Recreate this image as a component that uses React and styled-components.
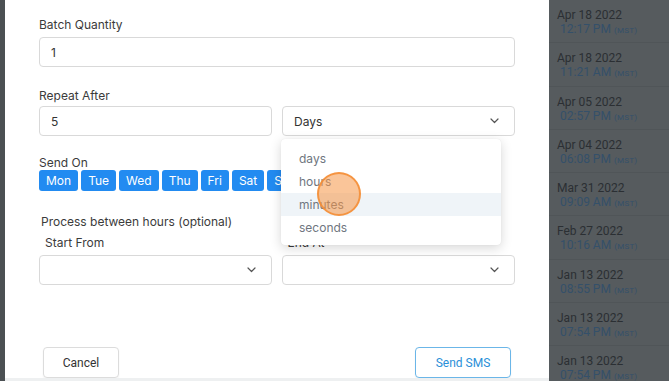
import React from "react";
import styled, { createGlobalStyle } from "styled-components";

const Global = createGlobalStyle`
  html, body { margin: 0; padding: 0; background: #fff; }
  body { font-family: Inter, "Noto Sans", sans-serif; }
  * { box-sizing: border-box; }
`;

const Page = styled.div`
  display: flex;
  width: 669px;
  height: 381px;
  overflow: hidden;
`;

const LeftStrip = styled.div`
  width: 5px;
  flex: none;
  background: #4b5053;
`;

const Modal = styled.div`
  position: relative;
  width: 544px;
  flex: none;
  display: flex;
  flex-direction: column;
  background: #fff;
`;

const Body = styled.div`
  flex: 1;
  display: flex;
  flex-direction: column;
  padding: 17px 34px 0 34px;
`;

const BottomStrip = styled.div`
  height: 3px;
  background: #eef0f1;
`;

const Label = styled.div`
  font-size: 12px;
  line-height: 15px;
  height: 15px;
  color: #3b3b3b;
  margin: ${(p) => p.$m || "0"};
  padding-left: ${(p) => p.$indent || 0}px;
`;

const Row = styled.div`
  display: flex;
  gap: 10px;
  margin: ${(p) => p.$m || "0"};
  & > * {
    flex: 1 1 0;
  }
`;

const Input = styled.div`
  height: 30px;
  flex-shrink: 0;
  border: 1px solid #d9d9d9;
  border-radius: 4px;
  display: flex;
  align-items: center;
  justify-content: space-between;
  padding: 0 15px 0 11px;
  font-size: 12px;
  color: #333;
  margin: ${(p) => p.$m || "0"};
`;

const Chevron = () => (
  <svg width="9" height="6" viewBox="0 0 9 6" fill="none">
    <path d="M1 1l3.5 3.5L8 1" stroke="#555" strokeWidth="1.2" strokeLinecap="round" strokeLinejoin="round" />
  </svg>
);

const Days = styled.div`
  display: flex;
  gap: 3px;
  flex-shrink: 0;
`;

const DayBtn = styled.div`
  height: 21px;
  padding: 0 7px;
  background: #228bf1;
  color: #fff;
  font-size: 12px;
  border-radius: 3px;
  display: flex;
  align-items: center;
  justify-content: center;
`;

const Footer = styled.div`
  margin-top: auto;
  display: flex;
  justify-content: space-between;
  padding: 0 4px 0 4px;
`;

const Button = styled.div`
  height: 31px;
  width: ${(p) => p.$w}px;
  border: 1px solid ${(p) => (p.$primary ? "#6bb6e8" : "#dcdcdc")};
  border-radius: 4px;
  color: ${(p) => (p.$primary ? "#2a8fd8" : "#333")};
  font-family: Roboto, "Liberation Sans", sans-serif;
  font-size: 12px;
  display: flex;
  align-items: center;
  justify-content: center;
  box-shadow: 0 1px 2px rgba(0, 0, 0, 0.06);
`;

const Menu = styled.div`
  position: absolute;
  left: 276px;
  top: 139px;
  width: 220px;
  padding: 8px 0 6px;
  background: #fff;
  border-radius: 4px;
  box-shadow: 0 3px 12px rgba(0, 0, 0, 0.16), 0 0 1px rgba(0, 0, 0, 0.1);
`;

const MenuItem = styled.div`
  height: 23px;
  display: flex;
  align-items: center;
  padding-left: 18px;
  font-size: 12px;
  color: #6f7680;
  background: ${(p) => (p.$active ? "#eff4f8" : "transparent")};
`;

const Cursor = styled.div`
  position: absolute;
  left: 312px;
  top: 172px;
  width: 44px;
  height: 44px;
  border-radius: 50%;
  background: rgba(246, 150, 70, 0.55);
  border: 2px solid rgba(245, 140, 50, 0.85);
`;

const Side = styled.div`
  flex: 1;
  background: #565b5e;
  font-family: Roboto, "Liberation Sans", sans-serif;
`;

const Entry = styled.div`
  height: 43.3px;
  padding: 8px 0 0 8px;
  border-bottom: 1px solid rgba(0, 0, 0, 0.06);
`;

const DateText = styled.div`
  font-size: 12px;
  line-height: 14px;
  color: #2b2f33;
`;

const TimeText = styled.div`
  font-size: 12px;
  line-height: 14px;
  color: #34506a;
  padding-left: 3px;
  span {
    font-size: 8px;
    letter-spacing: 0.3px;
  }
`;

const entries = [
  ["Apr 18 2022", "12:17 PM"],
  ["Apr 18 2022", "11:21 AM"],
  ["Apr 05 2022", "02:57 PM"],
  ["Apr 04 2022", "06:08 PM"],
  ["Mar 31 2022", "09:09 AM"],
  ["Feb 27 2022", "10:16 AM"],
  ["Jan 13 2022", "08:55 PM"],
  ["Jan 13 2022", "07:54 PM"],
  ["Jan 13 2022", "07:54 PM"],
];

const days = ["Mon", "Tue", "Wed", "Thu", "Fri", "Sat", "Sun"];

export default function App() {
  return (
    <Page>
      <Global />
      <LeftStrip />
      <Modal>
        <Body>
          <Label>Batch Quantity</Label>
          <Input $m="5px 0 0 0">1</Input>
          <Label $m="21px 0 0 0">Repeat After</Label>
          <Row $m="3px 0 0 0">
            <Input>5</Input>
            <Input>
              Days
              <Chevron />
            </Input>
          </Row>
          <Label $m="19px 0 0 0">Send On</Label>
          <Days>
            {days.map((d) => (
              <DayBtn key={d}>{d}</DayBtn>
            ))}
          </Days>
          <Label $m="23px 0 0 0" $indent={2}>Process between hours (optional)</Label>
          <Row $m="6px 0 0 0">
            <Label $indent={6}>Start From</Label>
            <Label $indent={5}>End At</Label>
          </Row>
          <Row $m="5px 0 0 0">
            <Input>
              <span />
              <Chevron />
            </Input>
            <Input>
              <span />
              <Chevron />
            </Input>
          </Row>
          <Footer>
            <Button $w={76}>Cancel</Button>
            <Button $w={96} $primary>Send SMS</Button>
          </Footer>
        </Body>
        <BottomStrip />
        <Menu>
          <MenuItem>days</MenuItem>
          <MenuItem>hours</MenuItem>
          <MenuItem $active>minutes</MenuItem>
          <MenuItem>seconds</MenuItem>
        </Menu>
        <Cursor />
      </Modal>
      <Side>
        {entries.map(([d, t], i) => (
          <Entry key={i}>
            <DateText>{d}</DateText>
            <TimeText>
              {t} <span>(MST)</span>
            </TimeText>
          </Entry>
        ))}
      </Side>
    </Page>
  );
}
